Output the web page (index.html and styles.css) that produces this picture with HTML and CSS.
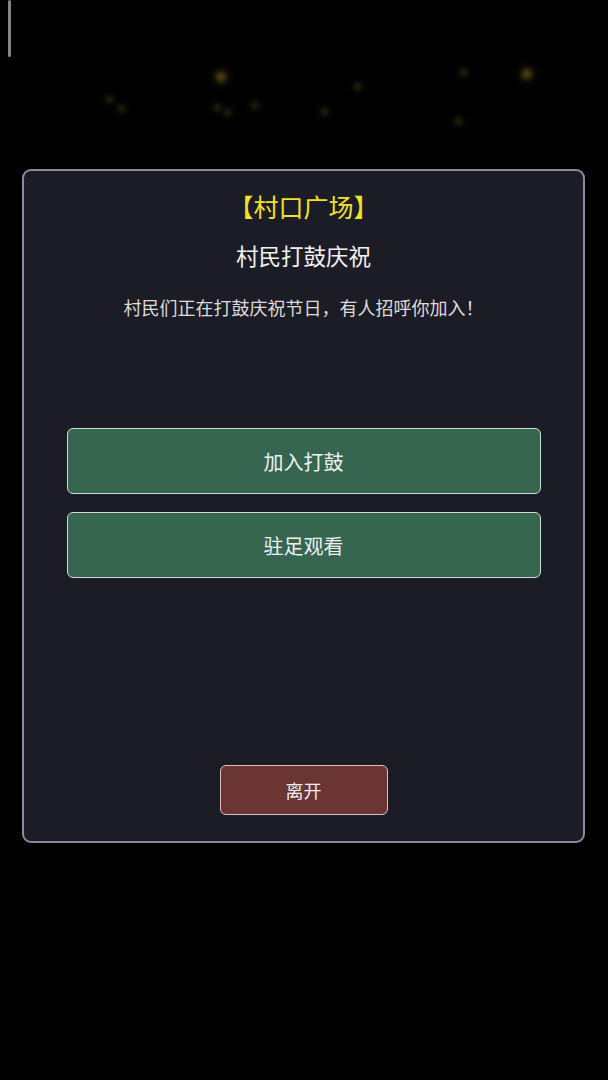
FILE: index.html
```html
<!DOCTYPE html>
<html lang="zh">
<head>
<meta charset="utf-8">
<link rel="stylesheet" href="styles.css">
</head>
<body>
<div class="scene">
  <div class="scrollbar"></div>
  <div class="sparks">
    <span class="spark gold" style="left:216px;top:72px"></span>
    <span class="spark dim" style="left:106px;top:96px"></span>
    <span class="spark dim" style="left:118px;top:105px"></span>
    <span class="spark dim" style="left:214px;top:104px"></span>
    <span class="spark dim" style="left:251px;top:102px"></span>
    <span class="spark dim" style="left:224px;top:109px"></span>
    <span class="spark dim" style="left:354px;top:83px"></span>
    <span class="spark dim" style="left:321px;top:108px"></span>
    <span class="spark dim" style="left:460px;top:69px"></span>
    <span class="spark gold" style="left:522px;top:69px"></span>
    <span class="spark dim" style="left:455px;top:118px"></span>
  </div>
  <div class="dialog">
    <div class="place">【村口广场】</div>
    <div class="event">村民打鼓庆祝</div>
    <div class="desc">村民们正在打鼓庆祝节日，有人招呼你加入！</div>
    <div class="choices">
      <button class="choice">加入打鼓</button>
      <button class="choice">驻足观看</button>
    </div>
    <button class="leave">离开</button>
  </div>
</div>
</body>
</html>
```
FILE: styles.css
```css
html, body {
  margin: 0;
  padding: 0;
  background: #000;
}
body {
  width: 608px;
  height: 1080px;
  overflow: hidden;
  font-family: "Noto Sans CJK SC", "Noto Sans", sans-serif;
}
.scene {
  position: relative;
  width: 608px;
  height: 1080px;
  padding-top: 169px;
  box-sizing: border-box;
}
.scrollbar {
  position: absolute;
  left: 8px;
  top: 0;
  width: 3px;
  height: 57px;
  background: #858585;
  border-radius: 2px;
}
.sparks {
  position: absolute;
  inset: 0;
  pointer-events: none;
}
.spark {
  position: absolute;
  width: 6px;
  height: 6px;
  border-radius: 50%;
  filter: blur(2px);
}
.spark.gold {
  width: 10px;
  height: 10px;
  background: #4a3c12;
  box-shadow: 0 0 8px 3px rgba(90, 75, 20, 0.35);
}
.spark.dim {
  width: 7px;
  height: 7px;
  background: #22220f;
  box-shadow: 0 0 6px 2px rgba(50, 50, 25, 0.35);
}
.dialog {
  margin-left: 22px;
  width: 563px;
  height: 674px;
  box-sizing: border-box;
  background: #1c1c26;
  border: 2px solid #8b8a98;
  border-radius: 9px;
  display: flex;
  flex-direction: column;
  align-items: center;
  padding: 19px 43px 26px;
  position: relative;
}
.place {
  color: #f2e12c;
  font-size: 25px;
  line-height: 32px;
}
.event {
  margin-top: 18px;
  color: #f2f2f2;
  font-size: 22.5px;
  line-height: 30px;
}
.desc {
  margin-top: 25px;
  color: #dcdcdc;
  font-size: 18px;
  line-height: 24px;
}
.choices {
  margin-top: 109px;
  display: flex;
  flex-direction: column;
  gap: 18px;
  width: 474px;
}
.choice {
  height: 66px;
  background: #366650;
  border: 1px solid #cfdad2;
  border-radius: 6px;
  color: #f0f0f0;
  font-family: inherit;
  font-size: 20px;
}
.leave {
  margin-top: auto;
  width: 168px;
  height: 50px;
  background: #6a3532;
  border: 1px solid #d8c2c1;
  border-radius: 6px;
  color: #f0f0f0;
  font-family: inherit;
  font-size: 18px;
}
```
